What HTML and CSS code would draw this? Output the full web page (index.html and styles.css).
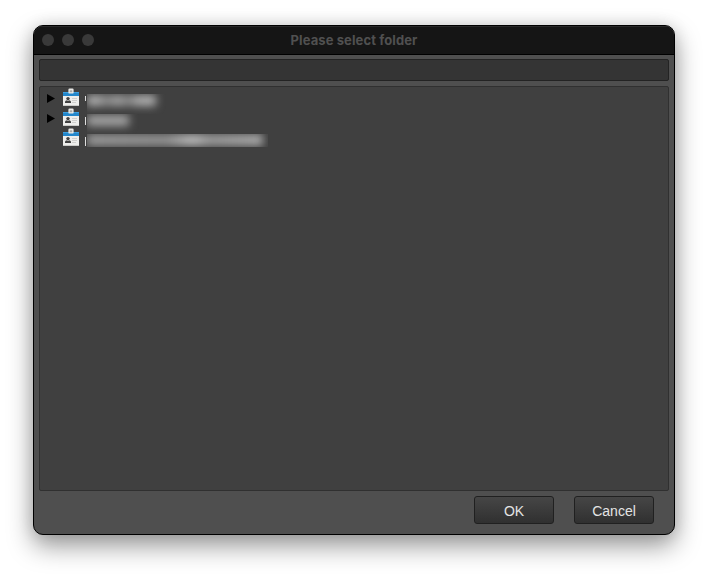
FILE: index.html
```html
<!DOCTYPE html>
<html lang="en">
<head>
<meta charset="utf-8">
<title>Please select folder</title>
<link rel="stylesheet" href="styles.css">
</head>
<body>
<svg width="0" height="0" class="defs">
  <symbol id="account" viewBox="0 0 16 18">
    <rect x="0" y="4" width="16" height="14" fill="#eeeeec"/>
    <rect x="0" y="17" width="16" height="1" fill="#c9c9c6"/>
    <rect x="0" y="4" width="16" height="4" fill="#2387cb"/>
    <rect x="0" y="4" width="16" height="1" fill="#3fa0de"/>
    <rect x="5.4" y="0.6" width="5.2" height="5" rx="1.2" fill="#e9e9e7"/>
    <rect x="6.7" y="2.2" width="2.6" height="2" rx=".8" fill="#aaa9a5"/>
    <circle cx="5" cy="10.6" r="1.7" fill="#414141"/>
    <path d="M2 15V13.8Q2.2 12.3 4 12.2L5 13L6 12.2Q7.8 12.3 8 13.8V15Z" fill="#414141"/>
    <path d="M9 10.5H14M9 12.5H14M9 14.5H13" stroke="#cfcfcd" stroke-width="1"/>
  </symbol>
</svg>
<div class="window">
  <header class="titlebar">
    <div class="lights"><i></i><i></i><i></i></div>
    <h1>Please select folder</h1>
  </header>
  <main class="content">
    <input class="search" type="text" aria-label="Search">
    <ul class="tree">
      <li class="row"><span class="arrow"></span><svg class="icon"><use href="#account"/></svg><i class="edge short"></i><span class="hidden-name"><i class="name-one"></i></span></li>
      <li class="row"><span class="arrow"></span><svg class="icon"><use href="#account"/></svg><i class="edge low"></i><span class="hidden-name"><i class="name-two"></i></span></li>
      <li class="row"><span class="arrow none"></span><svg class="icon"><use href="#account"/></svg><i class="edge"></i><span class="hidden-name"><i class="name-three"></i></span></li>
    </ul>
    <footer class="actions">
      <button>OK</button>
      <button>Cancel</button>
    </footer>
  </main>
</div>
</body>
</html>
```

FILE: styles.css
```css
* { box-sizing: border-box; }
body {
  margin: 0;
  padding: 25px 33px;
  height: 576px;
  overflow: hidden;
  background: #fff;
  font-family: "Liberation Sans", Arial, sans-serif;
}
.defs { display: none; }
.window {
  width: 642px;
  height: 510px;
  border: 1px solid #000;
  border-radius: 10px;
  overflow: hidden;
  background: #4f4f4f;
  box-shadow: 0 11px 26px rgba(0,0,0,.4), 0 0 16px rgba(0,0,0,.12);
}
.titlebar {
  display: grid;
  grid-template-columns: 60px 1fr 60px;
  align-items: center;
  height: 29px;
  padding-bottom: 2px;
  background: #151515;
  border-top: 1px solid #292929;
  border-bottom: 1px solid #000;
}
.lights { display: flex; gap: 8px; padding-left: 8px; }
.lights i { flex: none; width: 12px; height: 12px; border-radius: 50%; background: #393939; }
h1 {
  margin: 0;
  text-align: center;
  white-space: nowrap;
  font: 700 13px/16px Inter, sans-serif;
  letter-spacing: .1px;
  color: #505050;
}
.content { display: flex; flex-direction: column; padding: 4px 5px 0; }
.search {
  width: 100%;
  height: 22px;
  padding: 0 4px;
  border: 1px solid #232323;
  border-radius: 2px;
  background: #343434;
  color: #ddd;
  outline: none;
}
.tree {
  list-style: none;
  margin: 5px 0 0;
  padding: 2px 0 0 7px;
  height: 405px;
  border: 1px solid #303030;
  border-radius: 2px;
  background: #404040;
}
.row { display: flex; height: 20px; }
.arrow {
  width: 8px;
  height: 9px;
  margin: 5px 8px 0 0;
  background: #000;
  clip-path: polygon(0 0, 100% 50%, 0 100%);
}
.arrow.none { background: none; }
.icon { width: 16px; height: 18px; margin-top: -1px; }
.edge { width: 1px; height: 9px; margin: 8px 1px 0 6px; background: #dedede; }
.edge.short { height: 5px; margin-top: 7px; }
.edge.low { height: 8px; }
.hidden-name { width: 181px; height: 20px; overflow: hidden; margin-top: 5px; }
.row:last-child .hidden-name { height: 13px; }
.hidden-name i { display: block; height: 11px; margin-top: 1px; filter: blur(4.5px); }
.name-one { width: 69px; background: linear-gradient(90deg, #b0b0b0 14%, #888 28%, #a6a6a6 45%, #858585 60%, #b0b0b0 75%); }
.name-two { width: 42px; background: #a4a4a4; }
.hidden-name .name-three { width: 176px; height: 12px; margin-top: 0; background: linear-gradient(90deg, #999, #929292 45%, #bcbcbc 60%, #9a9a9a 70%, #aaa); }
.actions { display: flex; justify-content: flex-end; gap: 20px; padding: 5px 15px 0 0; }
button {
  width: 80px;
  height: 28px;
  padding: 2px 0 0;
  border: 1px solid #202020;
  border-radius: 3px;
  background: linear-gradient(#464646, #303030);
  font: 14px/20px "Liberation Sans", Arial, sans-serif;
  color: #e4e4e4;
}
```
